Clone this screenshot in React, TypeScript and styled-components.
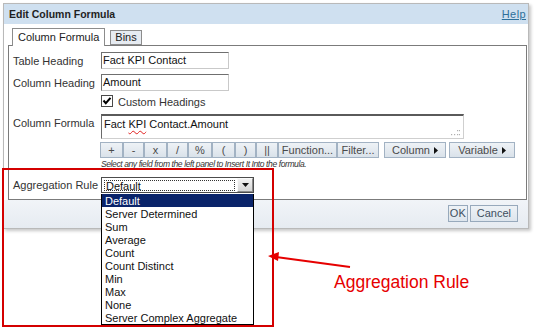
import React from "react";
import styled, { createGlobalStyle } from "styled-components";

const GlobalStyle = createGlobalStyle`
  html, body { margin: 0; padding: 0; background: #fff; }
  body { font-family: "Liberation Sans", Arial, sans-serif; }
  *, *::before, *::after { box-sizing: border-box; }
`;

const Page = styled.div`
  position: relative;
  width: 539px;
  height: 329px;
  padding: 3px 0 0 3px;
  overflow: hidden;
`;

const Dialog = styled.div`
  width: 526px;
  border: 1px solid #b9b9b9;
  background: #fff;
  box-shadow: 2px 2px 3px rgba(0, 0, 0, 0.22);
  display: flex;
  flex-direction: column;
`;

const TitleBar = styled.div`
  height: 20px;
  background: #cfe0f0;
  display: flex;
  align-items: center;
  justify-content: space-between;
  padding: 0 2px 0 5px;
`;

const Title = styled.span`
  font-size: 10.5px;
  font-weight: bold;
  color: #1f1f1f;
`;

const HelpLink = styled.a`
  font-size: 11px;
  color: #2d6f9a;
  text-decoration: underline;
  letter-spacing: 0.4px;
`;

const Body = styled.div`
  padding: 4px 1px 0 4px;
`;

const TabBar = styled.div`
  height: 17px;
  display: flex;
  align-items: flex-end;
  gap: 5px;
  padding-left: 4px;
`;

const Tab = styled.div<{ $active?: boolean }>`
  position: relative;
  z-index: 1;
  height: ${(p) => (p.$active ? 18 : 15)}px;
  margin-bottom: ${(p) => (p.$active ? -1 : 0)}px;
  padding: 0 ${(p) => (p.$active ? 5 : 4)}px;
  border: 1px solid #8c8c8c;
  border-bottom: ${(p) => (p.$active ? "none" : "1px solid #8c8c8c")};
  background: ${(p) => (p.$active ? "#fff" : "#e6ebf1")};
  font-size: 11px;
  color: #222;
  line-height: ${(p) => (p.$active ? 16 : 13)}px;
`;

const Panel = styled.div`
  height: 155px;
  border: 1px solid #7b7b7b;
  padding: 6px 0 0 4px;
  display: flex;
  flex-direction: column;
`;

const Row = styled.div<{ $mt?: number; $h: number; $top?: boolean }>`
  display: flex;
  align-items: ${(p) => (p.$top ? "flex-start" : "center")};
  margin-top: ${(p) => p.$mt ?? 0}px;
  height: ${(p) => p.$h}px;
`;

const Label = styled.div<{ $pt?: number }>`
  width: 88px;
  flex-shrink: 0;
  font-size: 11px;
  color: #333;
  padding-top: ${(p) => p.$pt ?? 0}px;
`;

const TextBox = styled.div`
  width: 128px;
  height: 17px;
  border: 1px solid;
  border-color: #6f6f6f #c9c9c9 #c9c9c9 #6f6f6f;
  font-size: 11px;
  line-height: 15px;
  color: #111;
  padding-left: 1px;
`;

const CheckLabel = styled.span`
  font-size: 11px;
  color: #333;
  margin-left: 5px;
  padding-top: 2px;
`;

const FormulaBox = styled.div`
  position: relative;
  width: 363px;
  height: 25px;
  border-style: solid;
  border-width: 2px 1px 1px 1px;
  border-color: #5a5a5a #cfcfcf #cfcfcf #6a6a6a;
  font-size: 11px;
  color: #111;
  padding: 2px 0 0 2px;
`;

const Spell = styled.span`
  text-decoration: underline wavy #e02020;
  text-decoration-thickness: 1px;
  text-underline-offset: 2px;
`;

const Grip = styled.svg`
  position: absolute;
  right: 3px;
  bottom: 2px;
`;

const ButtonBar = styled.div`
  display: flex;
  margin-left: -1px;
  height: 16px;
`;

const ToolButton = styled.div<{ $w: number; $ml?: number }>`
  width: ${(p) => p.$w}px;
  margin-left: ${(p) => p.$ml ?? 0}px;
  height: 16px;
  border: 1px solid #a2b2c3;
  background: linear-gradient(#eef2f6, #dae2ea);
  color: #4a4a4a;
  font-size: 11px;
  line-height: 14px;
  display: flex;
  align-items: center;
  justify-content: center;
  gap: 4px;
`;

const Hint = styled.div`
  font-size: 8.5px;
  font-style: italic;
  letter-spacing: -0.4px;
  color: #333;
  white-space: nowrap;
`;

const SelectBox = styled.div`
  position: relative;
  width: 153px;
  height: 16px;
  border: 1px solid #4c4c4c;
  display: flex;
  background: #fff;
`;

const SelectValue = styled.div`
  flex: 1;
  margin: 2px 2px 1px 2px;
  border: 1px dotted #333;
  font-size: 11px;
  line-height: 10px;
  color: #111;
  padding-left: 1px;
`;

const SelectArrow = styled.div`
  width: 16px;
  border: 1px solid;
  border-color: #fafafa #8a8a8a #8a8a8a #fafafa;
  background: linear-gradient(#f2f2f2, #d6d6d6);
  display: flex;
  align-items: center;
  justify-content: center;
`;

const DropList = styled.div`
  position: absolute;
  left: -1px;
  top: 16px;
  width: 153px;
  border: 1px solid #000;
  border-top: none;
  background: #fff;
  z-index: 5;
`;

const Option = styled.div<{ $selected?: boolean }>`
  height: 13px;
  padding: 2px 0 0 3px;
  font-size: 11px;
  line-height: 11px;
  white-space: nowrap;
  color: ${(p) => (p.$selected ? "#fff" : "#111")};
  background: ${(p) => (p.$selected ? "#0a246a" : "transparent")};
`;

const Footer = styled.div`
  height: 28px;
  background: linear-gradient(#f1f4f8, #e6ebf1);
  display: flex;
  justify-content: flex-end;
  align-items: flex-start;
  gap: 2px;
  padding: 5px 10px 0 0;
`;

const FooterButton = styled.div<{ $px: number }>`
  height: 17px;
  padding: 0 ${(p) => p.$px}px;
  border: 1px solid #97a9bc;
  background: linear-gradient(#eef2f6, #dde5ed);
  color: #3e4e5e;
  font-size: 11px;
  line-height: 15px;
`;

const CalloutFrame = styled.div`
  position: absolute;
  left: 2px;
  top: 168px;
  width: 272px;
  height: 159px;
  border: 2px solid #d40000;
  z-index: 10;
  pointer-events: none;
`;

const CalloutArrow = styled.svg`
  position: absolute;
  left: 266px;
  top: 249px;
  z-index: 11;
`;

const CalloutText = styled.div`
  position: absolute;
  left: 334px;
  top: 272px;
  font-size: 17.5px;
  line-height: 20px;
  color: #e60000;
  white-space: nowrap;
`;

const Triangle = () => (
  <svg width="4" height="7" viewBox="0 0 4 7">
    <polygon points="0,0 4,3.5 0,7" fill="#111" />
  </svg>
);

const options = [
  "Default",
  "Server Determined",
  "Sum",
  "Average",
  "Count",
  "Count Distinct",
  "Min",
  "Max",
  "None",
  "Server Complex Aggregate",
];

const opButtons: [string, number][] = [
  ["+", 23],
  ["-", 21],
  ["x", 23],
  ["/", 21],
  ["%", 24],
  ["(", 23],
  [")", 21],
  ["||", 22],
  ["Function...", 59],
  ["Filter...", 42],
];

export default function App() {
  return (
    <>
      <GlobalStyle />
      <Page>
        <Dialog>
          <TitleBar>
            <Title>Edit Column Formula</Title>
            <HelpLink>Help</HelpLink>
          </TitleBar>
          <Body>
            <TabBar>
              <Tab $active>Column Formula</Tab>
              <Tab>Bins</Tab>
            </TabBar>
            <Panel>
              <Row $h={17}>
                <Label>Table Heading</Label>
                <TextBox>Fact KPI Contact</TextBox>
              </Row>
              <Row $h={17} $mt={5}>
                <Label>Column Heading</Label>
                <TextBox>Amount</TextBox>
              </Row>
              <Row $h={13} $mt={3}>
                <Label />
                <svg width="12" height="12" viewBox="0 0 12 12">
                  <rect x="0.5" y="0.5" width="11" height="11" fill="#fff" stroke="#4a4a4a" />
                  <path d="M2.5 5.5 L4.8 8.2 L9.5 2.8" fill="none" stroke="#000" strokeWidth="2" />
                </svg>
                <CheckLabel>Custom Headings</CheckLabel>
              </Row>
              <Row $h={25} $mt={7} $top>
                <Label $pt={3}>Column Formula</Label>
                <FormulaBox>
                  Fact <Spell>KPI</Spell> Contact.Amount
                  <Grip width="9" height="6" viewBox="0 0 9 6">
                    <g fill="#b0b0b0">
                      <rect x="6" y="0" width="1.2" height="1.2" />
                      <rect x="8" y="0" width="1.2" height="1.2" />
                      <rect x="0" y="4" width="1.2" height="1.2" />
                      <rect x="3" y="4" width="1.2" height="1.2" />
                      <rect x="6" y="4" width="1.2" height="1.2" />
                      <rect x="8" y="4" width="1.2" height="1.2" />
                    </g>
                  </Grip>
                </FormulaBox>
              </Row>
              <Row $h={16} $mt={3}>
                <Label />
                <ButtonBar>
                  {opButtons.map(([t, w]) => (
                    <ToolButton key={t} $w={w}>
                      {t}
                    </ToolButton>
                  ))}
                  <ToolButton $w={62} $ml={5}>
                    Column <Triangle />
                  </ToolButton>
                  <ToolButton $w={66} $ml={3}>
                    Variable <Triangle />
                  </ToolButton>
                </ButtonBar>
              </Row>
              <Row $h={10} $mt={1}>
                <Label />
                <Hint>Select any field from the left panel to Insert It Into the formula.</Hint>
              </Row>
              <Row $h={16} $mt={8}>
                <Label>Aggregation Rule</Label>
                <SelectBox>
                  <SelectValue>Default</SelectValue>
                  <SelectArrow>
                    <svg width="7" height="4" viewBox="0 0 7 4">
                      <polygon points="0,0 7,0 3.5,4" fill="#111" />
                    </svg>
                  </SelectArrow>
                  <DropList>
                    {options.map((o, i) => (
                      <Option key={o} $selected={i === 0}>
                        {o}
                      </Option>
                    ))}
                  </DropList>
                </SelectBox>
              </Row>
            </Panel>
          </Body>
          <Footer>
            <FooterButton $px={1}>OK</FooterButton>
            <FooterButton $px={6}>Cancel</FooterButton>
          </Footer>
        </Dialog>
        <CalloutFrame />
        <CalloutArrow width="90" height="22" viewBox="0 0 90 22">
          <line x1="84" y1="18" x2="10" y2="8" stroke="#e60000" strokeWidth="2.2" />
          <polygon points="2,7 13,3 12,12" fill="#e60000" />
        </CalloutArrow>
        <CalloutText>Aggregation Rule</CalloutText>
      </Page>
    </>
  );
}
